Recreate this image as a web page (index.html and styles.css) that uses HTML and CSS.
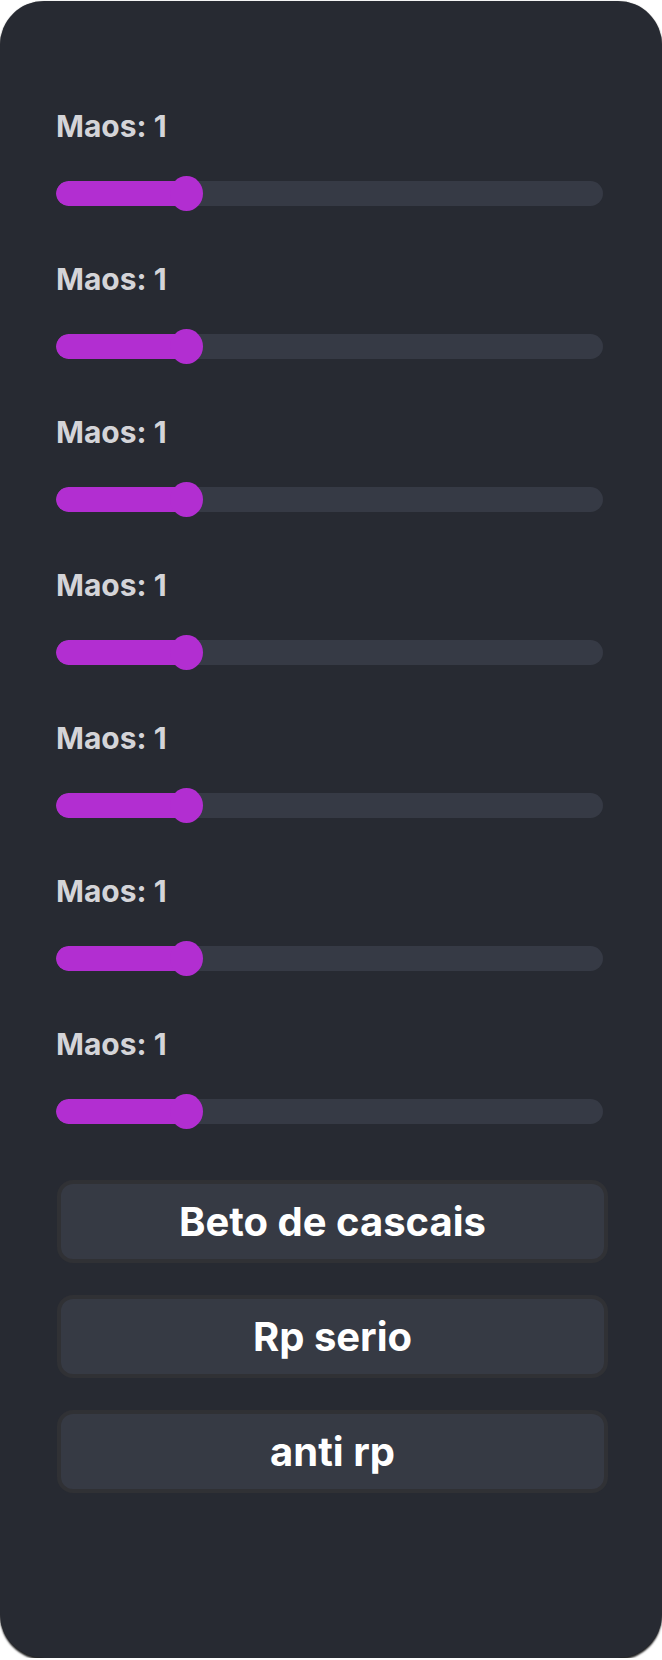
FILE: index.html
```html
<!DOCTYPE html>
<html lang="pt">
<head>
<meta charset="utf-8">
<title>Painel</title>
<link rel="stylesheet" href="styles.css">
</head>
<body>
<div class="card">
  <div class="sliders">
    <div class="row"><div class="label">Maos: 1</div><div class="slider"><div class="track"><div class="fill" style="width:131px"></div></div><div class="thumb" style="left:114px"></div></div></div>
    <div class="row"><div class="label">Maos: 1</div><div class="slider"><div class="track"><div class="fill" style="width:131px"></div></div><div class="thumb" style="left:114px"></div></div></div>
    <div class="row"><div class="label">Maos: 1</div><div class="slider"><div class="track"><div class="fill" style="width:131px"></div></div><div class="thumb" style="left:114px"></div></div></div>
    <div class="row"><div class="label">Maos: 1</div><div class="slider"><div class="track"><div class="fill" style="width:131px"></div></div><div class="thumb" style="left:114px"></div></div></div>
    <div class="row"><div class="label">Maos: 1</div><div class="slider"><div class="track"><div class="fill" style="width:131px"></div></div><div class="thumb" style="left:114px"></div></div></div>
    <div class="row"><div class="label">Maos: 1</div><div class="slider"><div class="track"><div class="fill" style="width:131px"></div></div><div class="thumb" style="left:114px"></div></div></div>
    <div class="row"><div class="label">Maos: 1</div><div class="slider"><div class="track"><div class="fill" style="width:131px"></div></div><div class="thumb" style="left:114px"></div></div></div>
  </div>
  <div class="buttons">
    <button class="btn">Beto de cascais</button>
    <button class="btn">Rp serio</button>
    <button class="btn">anti rp</button>
  </div>
</div>
</body>
</html>
```

FILE: styles.css
```css
html, body {
  margin: 0;
  padding: 0;
  background: #ffffff;
}

body {
  font-family: Inter, Roboto, "Liberation Sans", Arial, sans-serif;
}

.card {
  box-sizing: border-box;
  width: 662px;
  height: 1657px;
  margin-top: 1px;
  background: #272a32;
  border-radius: 44px;
  box-shadow: 0 0 1px rgba(0, 0, 0, 0.4), 0 2px 2px rgba(0, 0, 0, 0.85);
  padding: 110px 56px 0 56px;
  display: flex;
  flex-direction: column;
}

.sliders {
  display: flex;
  flex-direction: column;
  gap: 53px;
}

.row {
  display: flex;
  flex-direction: column;
  gap: 34px;
}

.label {
  font-weight: 700;
  font-size: 30px;
  line-height: 31px;
  color: #d4d4d8;
}

.slider {
  position: relative;
  height: 35px;
  display: flex;
  align-items: center;
}

.track {
  width: 547px;
  height: 25px;
  border-radius: 12.5px;
  background: #363a45;
  overflow: hidden;
}

.fill {
  height: 100%;
  background: #b22ed1;
  border-radius: 12.5px 0 0 12.5px;
}

.thumb {
  position: absolute;
  top: 0;
  width: 33px;
  height: 35px;
  border-radius: 50%;
  background: #b22ed1;
}

.buttons {
  margin-top: 51px;
  display: flex;
  flex-direction: column;
  gap: 32px;
}

.btn {
  box-sizing: border-box;
  width: 551px;
  height: 83px;
  margin-left: 1px;
  border: 4px solid #303135;
  border-radius: 16px;
  background: #363a44;
  color: #ffffff;
  font-family: Inter, Roboto, "Liberation Sans", Arial, sans-serif;
  font-weight: 700;
  font-size: 40px;
  line-height: 40px;
  display: flex;
  align-items: center;
  justify-content: center;
  padding: 0;
}
```
